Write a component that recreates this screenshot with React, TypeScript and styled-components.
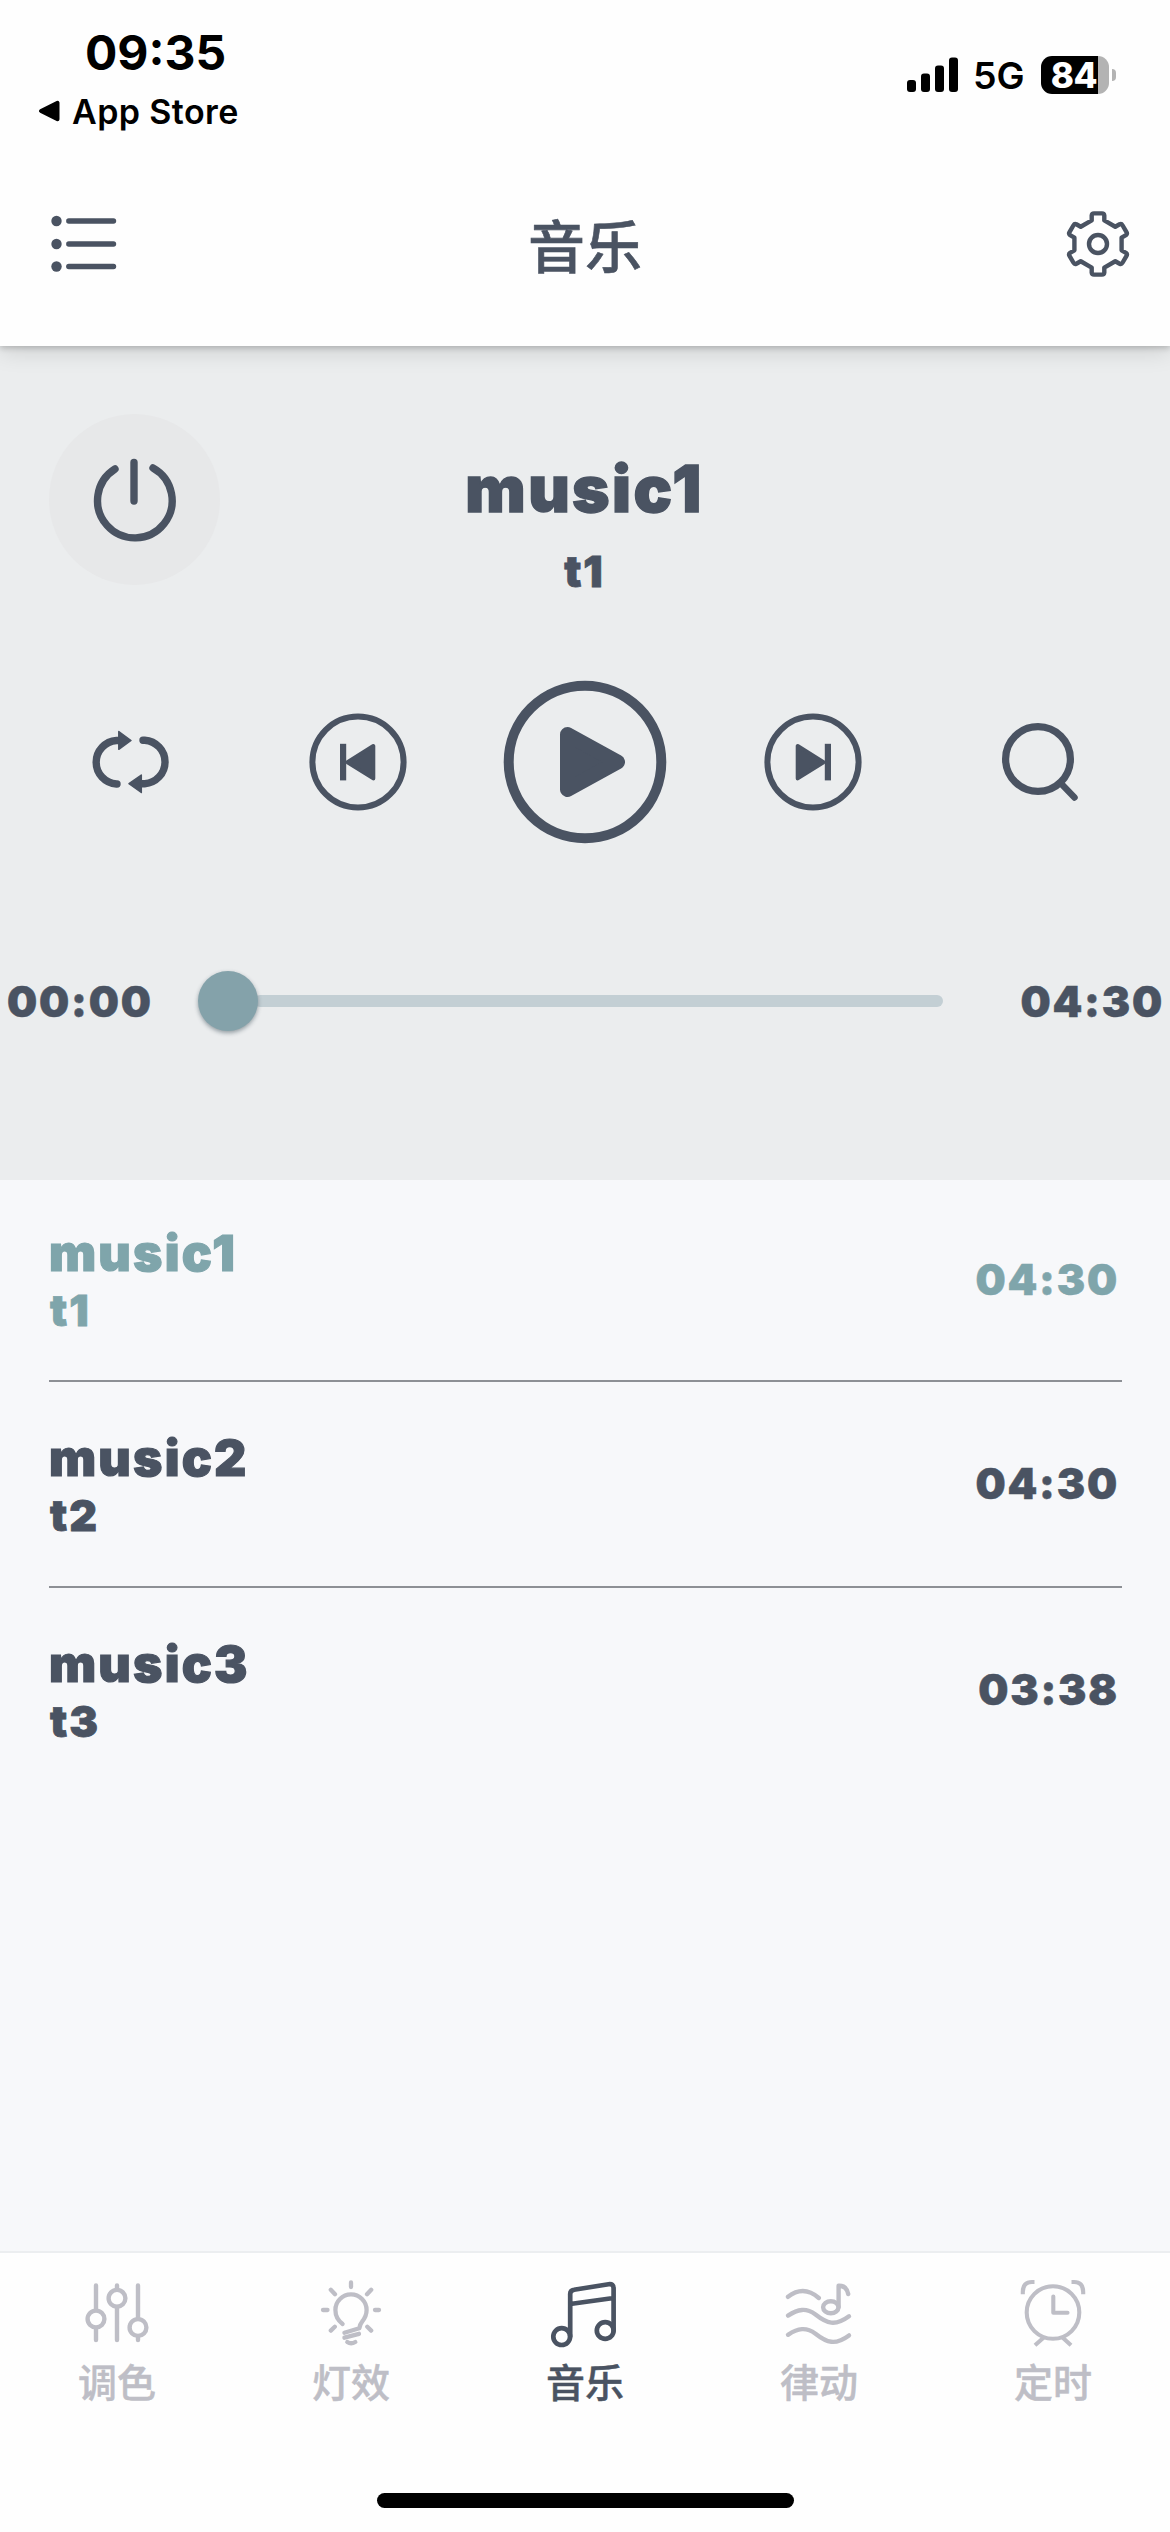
import React from "react";
import styled, { createGlobalStyle } from "styled-components";

const ink = "#4a5362";
const teal = "#7fa5ab";
const muted = "#bebec6";
const latin = `Inter, "Noto Sans CJK SC", sans-serif`;

const GlobalStyle = createGlobalStyle`
  * { box-sizing: border-box; }
  body { margin: 0; background: #f7f8fa; font-family: ${latin}; }
  svg { display: block; flex: none; }
`;

const Screen = styled.div`
  width: 1170px;
  height: 2532px;
  display: flex;
  flex-direction: column;
  overflow: hidden;
  background: #f7f8fa;
`;

const Header = styled.header`
  position: relative;
  z-index: 1;
  height: 346px;
  background: #fefefe;
  box-shadow: 0 2px 6px rgba(0, 0, 0, 0.2), 0 6px 22px rgba(0, 0, 0, 0.12);
`;

const StatusBar = styled.div`
  height: 142px;
  display: flex;
  justify-content: space-between;
  padding: 22px 54px 0 38px;
  color: #000;
`;

const StatusLeft = styled.div`
  display: flex;
  flex-direction: column;
`;

const Clock = styled.div`
  padding-left: 47px;
  font-size: 48px;
  font-weight: 700;
  line-height: 61px;
`;

const BackLink = styled.div`
  display: flex;
  align-items: center;
  gap: 12px;
  height: 56px;
  font-size: 34px;
  font-weight: 600;
  letter-spacing: 0.4px;
`;

const StatusRight = styled.div`
  display: flex;
  align-items: center;
  height: 105px;
`;

const Network = styled.span`
  margin: 2px 0 0 14px;
  width: 53px;
  font-size: 37.5px;
  font-weight: 600;
  letter-spacing: -0.2px;
`;

const Battery = styled.div`
  margin-left: 15px;
  width: 68px;
  height: 38px;
  border-radius: 11px;
  display: flex;
  align-items: center;
  justify-content: center;
  padding-right: 2px;
  background: linear-gradient(90deg, #000 57px, #b3b3b3 57px);
  color: #fff;
  font-size: 35px;
  font-weight: 800;
  letter-spacing: -0.5px;
`;

const BatteryNub = styled.div`
  margin-left: 3px;
  width: 4px;
  height: 12px;
  border-radius: 0 4px 4px 0;
  background: #b3b3b3;
`;

const NavBar = styled.div`
  height: 204px;
  padding: 0 36px 0 48px;
  display: grid;
  grid-template-columns: 72px 1fr 72px;
  align-items: center;
`;

const Title = styled.h1`
  margin: 0 12px 3px 0;
  text-align: center;
  font-family: "Noto Sans CJK SC", sans-serif;
  font-size: 57px;
  font-weight: 500;
  line-height: 80px;
  color: ${ink};
  -webkit-text-stroke: 0.6px ${ink};
`;

const Player = styled.section`
  height: 834px;
  display: flex;
  flex-direction: column;
  background: #ebedee;
  color: ${ink};
`;

const NowPlaying = styled.div`
  display: grid;
  grid-template-columns: 172px 1fr 172px;
  padding: 68px 48px 0 49px;
  height: 308px;
`;

const PowerButton = styled.div`
  width: 171px;
  height: 171px;
  padding-right: 2px;
  border-radius: 50%;
  background: #e7e8e9;
  display: flex;
  align-items: center;
  justify-content: center;
`;

const TrackHeading = styled.div`
  display: flex;
  flex-direction: column;
  align-items: center;
  padding: 35px 2px 0 0;
`;

const TrackTitle = styled.div`
  font-size: 64px;
  font-weight: 900;
  line-height: 80px;
  letter-spacing: 2.4px;
  -webkit-text-stroke: 1.4px ${ink};
`;

const TrackArtist = styled.div`
  font-size: 43px;
  font-weight: 900;
  line-height: 84px;
  letter-spacing: 2px;
  -webkit-text-stroke: 0.8px ${ink};
`;

const Controls = styled.div`
  display: grid;
  grid-template-columns: repeat(5, 227.5px);
  justify-content: center;
  align-items: center;
  justify-items: center;
  height: 216px;
`;

const Progress = styled.div`
  display: flex;
  align-items: center;
  height: 60px;
  margin-top: 101px;
  padding: 0 6px 0 7px;
`;

const TimeText = styled.div<{ $align: "left" | "right" }>`
  width: 150px;
  text-align: ${(p) => p.$align};
  font-size: 42.5px;
  font-weight: 900;
  letter-spacing: 1.8px;
  white-space: nowrap;
  -webkit-text-stroke: 0.5px currentColor;
`;

const Slider = styled.div`
  display: flex;
  align-items: center;
  width: 745px;
  margin: 0 auto 0 41px;
`;

const Thumb = styled.div`
  position: relative;
  width: 60px;
  height: 60px;
  border-radius: 50%;
  background: #84a2aa;
  box-shadow: 0 2px 4px rgba(40, 60, 70, 0.45);
`;

const Track = styled.div`
  flex: 1;
  height: 12px;
  margin-left: -4px;
  border-radius: 6px;
  background: #c3cfd4;
`;

const TrackList = styled.main`
  flex: 1;
  padding: 0 48px 0 49px;
`;

const TrackRow = styled.div<{ $active?: boolean; $last?: boolean }>`
  display: flex;
  align-items: center;
  justify-content: space-between;
  height: ${(p) => (p.$active ? 202 : 205.5)}px;
  border-bottom: ${(p) => (p.$last ? "0" : "2px")} solid #8d9095;
  color: ${(p) => (p.$active ? teal : ink)};
`;

const TrackNames = styled.div<{ $active?: boolean }>`
  align-self: flex-start;
  display: flex;
  flex-direction: column;
  padding-top: ${(p) => (p.$active ? 43 : 46)}px;
`;

const RowTitle = styled.div`
  font-size: 50px;
  font-weight: 900;
  line-height: 60px;
  letter-spacing: 2.2px;
  -webkit-text-stroke: 1.2px currentColor;
`;

const RowArtist = styled.div`
  padding-left: 1px;
  font-size: 43px;
  font-weight: 900;
  line-height: 54px;
  letter-spacing: 2px;
  -webkit-text-stroke: 0.8px currentColor;
`;

const RowTime = styled.div`
  padding-right: 3px;
  font-size: 42.5px;
  font-weight: 900;
  line-height: 50px;
  letter-spacing: 1.8px;
  -webkit-text-stroke: 0.5px currentColor;
`;

const TabBar = styled.nav`
  height: 281px;
  border-top: 2px solid #eceef0;
  background: #fefefe;
  display: flex;
  flex-direction: column;
  align-items: center;
`;

const Tabs = styled.div`
  display: grid;
  grid-template-columns: repeat(5, 1fr);
  width: 100%;
  height: 240px;
`;

const Tab = styled.div<{ $active?: boolean }>`
  display: flex;
  flex-direction: column;
  align-items: center;
  padding-top: 24px;
  color: ${(p) => (p.$active ? ink : muted)};
`;

const TabLabel = styled.span`
  margin-top: 1px;
  font-family: "Noto Sans CJK SC", sans-serif;
  font-size: 39px;
  font-weight: 500;
  line-height: 60px;
  -webkit-text-stroke: 0.5px currentColor;
`;

const HomeIndicator = styled.div`
  width: 417px;
  height: 15px;
  border-radius: 8px;
  background: #000;
`;

const stroke = (width: number) => ({
  fill: "none",
  stroke: "currentColor",
  strokeWidth: width,
  strokeLinecap: "round" as const,
  strokeLinejoin: "round" as const,
});

const BackArrow = () => (
  <svg width="22" height="22" viewBox="0 0 22 22">
    <path d="M3 11 L19.5 2.8 V19.2 Z" fill="#000" stroke="#000" strokeWidth="4" strokeLinejoin="round" />
  </svg>
);

const Signal = () => (
  <svg width="52" height="35" viewBox="0 0 52 35">
    <rect x="0" y="23" width="9" height="12" rx="3" />
    <rect x="14" y="16.5" width="9" height="18.5" rx="3" />
    <rect x="28" y="8.5" width="9" height="26.5" rx="3" />
    <rect x="42" y="0.5" width="9" height="34.5" rx="3" />
  </svg>
);

const MenuIcon = () => (
  <svg width="70" height="60" viewBox="0 0 70 60" color={ink}>
    {[7, 30, 52.5].map((y) => (
      <g key={y}>
        <circle cx="8.5" cy={y} r="5.2" fill="currentColor" />
        <path d={`M20.8 ${y} H65.5`} {...stroke(5.4)} />
      </g>
    ))}
  </svg>
);

const gearPath = () => {
  const parts: string[] = [];
  for (let i = 0; i < 6; i++) {
    const a = (i * Math.PI) / 3;
    const p = (x: number, y: number) =>
      `${(36 + x * Math.cos(a) - y * Math.sin(a)).toFixed(2)} ${(36 + x * Math.sin(a) + y * Math.cos(a)).toFixed(2)}`;
    parts.push(
      `${i ? "L" : "M"}${p(-6.3, -23.6)} L${p(-6.3, -28.6)} Q${p(-6.1, -30.6)} ${p(-4, -30.6)} L${p(4, -30.6)} Q${p(6.1, -30.6)} ${p(6.3, -28.6)} L${p(6.3, -23.6)}`
    );
  }
  return parts.join(" ") + " Z";
};

const GearIcon = () => (
  <svg width="72" height="72" viewBox="0 0 72 72" color={ink}>
    <path d={gearPath()} {...stroke(4.4)} />
    <circle cx="36" cy="36" r="9" {...stroke(4.4)} />
  </svg>
);

const PowerIcon = () => (
  <svg width="90" height="90" viewBox="0 0 90 90">
    <path d="M26 14 A37.3 37.3 0 1 0 64 13" {...stroke(7.4)} />
    <path d="M45 7.5 V46" {...stroke(7.4)} />
  </svg>
);

const RepeatIcon = () => (
  <svg width="108" height="100" viewBox="0 0 108 100">
    <path d="M41 72 H40.5 A21.8 21.8 0 0 1 40.5 28.5 H45" {...stroke(7.4)} />
    <path d="M42.8 19.5 L55 28.5 L42.8 37.3 Z" fill="currentColor" stroke="currentColor" strokeWidth="1.5" strokeLinejoin="round" />
    <path d="M67 28.2 H68.7 A21.8 21.8 0 0 1 68.7 71.7 H64" {...stroke(7.4)} />
    <path d="M65.3 63 L53 71.7 L65.3 80.5 Z" fill="currentColor" stroke="currentColor" strokeWidth="1.5" strokeLinejoin="round" />
  </svg>
);

const SkipIcon = ({ next }: { next?: boolean }) => (
  <svg width="98" height="98" viewBox="0 0 98 98">
    <circle cx="49" cy="49" r="45.6" {...stroke(6)} />
    <g transform={next ? "translate(98 0) scale(-1 1)" : undefined}>
      <path d="M31 30.8 H37.2 V67.4 H31 Z" fill="currentColor" />
      <path d="M38.5 49.2 L64.3 33 V65.4 Z" fill="currentColor" stroke="currentColor" strokeWidth="4" strokeLinejoin="round" />
    </g>
  </svg>
);

const PlayIcon = () => (
  <svg width="164" height="164" viewBox="0 0 164 164">
    <circle cx="82" cy="82" r="76.3" {...stroke(10)} />
    <path d="M64.5 54.5 L114.5 82 L64.5 109.5 Z" fill="currentColor" stroke="currentColor" strokeWidth="15" strokeLinejoin="round" />
  </svg>
);

const SearchIcon = () => (
  <svg width="108" height="100" viewBox="0 0 108 100">
    <circle cx="52" cy="47" r="32.4" {...stroke(7.2)} />
    <path d="M75.5 72 L88.5 85.5" {...stroke(6.5)} />
  </svg>
);

const SlidersIcon = () => (
  <svg width="72" height="72" viewBox="0 0 72 72">
    <g {...stroke(4.4)}>
      <path d="M15 8.5 V33 M15 51 V63 M36 8.5 V12 M36 30 V63 M57 8.5 V41 M57 59.5 V63" />
      <circle cx="15" cy="42" r="8.4" />
      <circle cx="36" cy="21.3" r="8.4" />
      <circle cx="57" cy="50.5" r="8.4" />
    </g>
  </svg>
);

const BulbIcon = () => (
  <svg width="72" height="72" viewBox="0 0 72 72">
    <g {...stroke(4.3)}>
      <path d="M27.6 47 C23 43.5 20.4 38.5 20.4 33 A15.6 15.6 0 0 1 51.6 33 C51.6 38 50 41 47.3 44.3 Q45 47 44.3 51.3 L29.4 55.7" />
      <path d="M29.4 60.7 L44 56.8 M32.3 65 Q36 67.6 40.3 65" />
      <path d="M36 5.5 V10 M8 33 H12.5 M60 33 H64 M15.8 12.8 L20 17.3 M56.2 12.8 L52 17.3 M15.8 53.6 L19.8 49.8 M56.2 53.6 L52.3 49.8" />
    </g>
  </svg>
);

const MusicIcon = () => (
  <svg width="72" height="72" viewBox="0 0 72 72">
    <g {...stroke(4.7)}>
      <circle cx="12.7" cy="59.6" r="8.4" />
      <circle cx="56.2" cy="53.5" r="8.4" />
      <path d="M21.2 59.6 V17 Q21.2 13.3 25 12.8 L59.5 7.2 Q64.6 6.4 64.6 11.5 V53.5 M21.2 27 L64.6 21" />
    </g>
  </svg>
);

const RhythmIcon = () => (
  <svg width="72" height="72" viewBox="0 0 72 72">
    <g {...stroke(4.4)}>
      <path d="M5 19.8 C15 12 25 11.5 35.8 21" />
      <path d="M5 38.6 C15 32 23 30.5 32.5 37.5 C44 46.5 52 49.5 66 39.2" />
      <path d="M5 57.8 C15 51.2 23 49.7 32.5 56.7 C44 65.7 52 68.7 66 58.4" />
      <ellipse cx="47.8" cy="30.2" rx="7.7" ry="6" />
      <path d="M55.6 30 V8.8 Q63.5 8.5 65.2 17" />
    </g>
  </svg>
);

const AlarmIcon = () => (
  <svg width="72" height="72" viewBox="0 0 72 72">
    <g {...stroke(4.1)} strokeLinecap="butt">
      <circle cx="36" cy="35.5" r="26.3" />
      <path d="M36.3 19.5 V35.7 H50.5" strokeLinecap="round" />
      <path d="M5.8 17.3 V15 Q5.8 5 15 5 H17.5 M66.2 17.3 V15 Q66.2 5 57 5 H54.5" />
      <path d="M26.5 60.8 L18 68.3 M45.8 60.8 L54 68.3" />
    </g>
  </svg>
);

const tracks = [
  { title: "music1", artist: "t1", time: "04:30" },
  { title: "music2", artist: "t2", time: "04:30" },
  { title: "music3", artist: "t3", time: "03:38" },
];

const tabs = [
  { label: "调色", Icon: SlidersIcon },
  { label: "灯效", Icon: BulbIcon },
  { label: "音乐", Icon: MusicIcon },
  { label: "律动", Icon: RhythmIcon },
  { label: "定时", Icon: AlarmIcon },
];

export default function App() {
  const current = 0;
  return (
    <Screen>
      <GlobalStyle />
      <Header>
        <StatusBar>
          <StatusLeft>
            <Clock>09:35</Clock>
            <BackLink>
              <BackArrow />
              App Store
            </BackLink>
          </StatusLeft>
          <StatusRight>
            <Signal />
            <Network>5G</Network>
            <Battery>84</Battery>
            <BatteryNub />
          </StatusRight>
        </StatusBar>
        <NavBar>
          <MenuIcon />
          <Title>音乐</Title>
          <GearIcon />
        </NavBar>
      </Header>
      <Player>
        <NowPlaying>
          <PowerButton>
            <PowerIcon />
          </PowerButton>
          <TrackHeading>
            <TrackTitle>{tracks[current].title}</TrackTitle>
            <TrackArtist>{tracks[current].artist}</TrackArtist>
          </TrackHeading>
        </NowPlaying>
        <Controls>
          <RepeatIcon />
          <SkipIcon />
          <PlayIcon />
          <SkipIcon next />
          <SearchIcon />
        </Controls>
        <Progress>
          <TimeText $align="left">00:00</TimeText>
          <Slider>
            <Thumb />
            <Track />
          </Slider>
          <TimeText $align="right">{tracks[current].time}</TimeText>
        </Progress>
      </Player>
      <TrackList>
        {tracks.map((t, i) => (
          <TrackRow key={t.title} $active={i === current} $last={i === tracks.length - 1}>
            <TrackNames $active={i === current}>
              <RowTitle>{t.title}</RowTitle>
              <RowArtist>{t.artist}</RowArtist>
            </TrackNames>
            <RowTime>{t.time}</RowTime>
          </TrackRow>
        ))}
      </TrackList>
      <TabBar>
        <Tabs>
          {tabs.map(({ label, Icon }, i) => (
            <Tab key={label} $active={i === 2}>
              <Icon />
              <TabLabel>{label}</TabLabel>
            </Tab>
          ))}
        </Tabs>
        <HomeIndicator />
      </TabBar>
    </Screen>
  );
}
